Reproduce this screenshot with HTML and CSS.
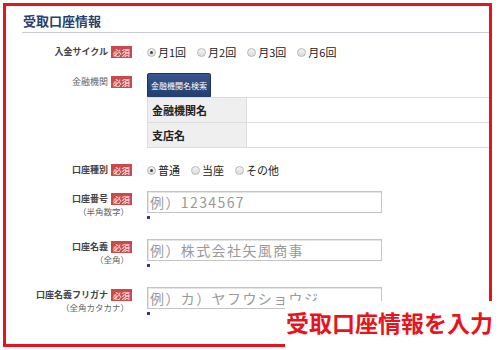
FILE: index.html
```html
<!DOCTYPE html>
<html>
<head>
  <meta charset="utf-8" />
  <meta name="viewport" content="width=device-width, initial-scale=1.0">
  <title>受取口座情報</title>
  <link rel="stylesheet" href="styles.css">
</head>
<body>

  <div class="frame">
    <h2 class="section-title">受取口座情報</h2>

    <div class="form">
      <!-- 入金サイクル -->
      <div class="form-row row-cycle">
        <div class="field-label">
          <div class="label-line"><span>入金サイクル</span><span class="badge">必須</span></div>
        </div>
        <div class="field-value radios">
          <label class="radio checked"><span class="radio-mark"></span>月1回</label>
          <label class="radio"><span class="radio-mark"></span>月2回</label>
          <label class="radio"><span class="radio-mark"></span>月3回</label>
          <label class="radio"><span class="radio-mark"></span>月6回</label>
        </div>
      </div>

      <!-- 金融機関 -->
      <div class="form-row row-bank">
        <div class="field-label">
          <div class="label-line light"><span>金融機関</span><span class="badge">必須</span></div>
        </div>
        <div class="field-value">
          <button class="search-btn">金融機関名検索</button>
          <table class="bank-table">
            <tr><th>金融機関名</th><td></td></tr>
            <tr><th>支店名</th><td></td></tr>
          </table>
        </div>
      </div>

      <!-- 口座種別 -->
      <div class="form-row row-type">
        <div class="field-label">
          <div class="label-line"><span>口座種別</span><span class="badge">必須</span></div>
        </div>
        <div class="field-value radios">
          <label class="radio checked"><span class="radio-mark"></span>普通</label>
          <label class="radio"><span class="radio-mark"></span>当座</label>
          <label class="radio"><span class="radio-mark"></span>その他</label>
        </div>
      </div>

      <!-- 口座番号 -->
      <div class="form-row row-input first">
        <div class="field-label">
          <div class="label-line"><span>口座番号</span><span class="badge">必須</span></div>
          <div class="sub">（半角数字）</div>
        </div>
        <div class="field-value">
          <input class="text-input" type="text" placeholder="例）1234567">
          <div class="dot"></div>
        </div>
      </div>

      <!-- 口座名義 -->
      <div class="form-row row-input">
        <div class="field-label">
          <div class="label-line"><span>口座名義</span><span class="badge">必須</span></div>
          <div class="sub">（全角）</div>
        </div>
        <div class="field-value">
          <input class="text-input" type="text" placeholder="例）株式会社矢風商事">
          <div class="dot"></div>
        </div>
      </div>

      <!-- 口座名義フリガナ -->
      <div class="form-row row-input">
        <div class="field-label">
          <div class="label-line"><span>口座名義フリガナ</span><span class="badge">必須</span></div>
          <div class="sub">（全角カタカナ）</div>
        </div>
        <div class="field-value">
          <input class="text-input" type="text" placeholder="例）カ）ヤフウショウジ">
          <div class="dot"></div>
        </div>
      </div>
    </div>
  </div>

  <div class="callout">受取口座情報を入力</div>

</body>
</html>
```

FILE: styles.css
```css
/* --- General Setup --- */
:root {
  --frame-red: #e8141c;
  --navy: #283f6d;
  --badge-red: #c84a4c;
  --line-color: #dcdcdc;
  --text-color: #333;
}
*, *::before, *::after {
  box-sizing: border-box;
}
html, body {
  margin: 0;
  overflow: hidden;
}
body {
  position: relative;
  width: 500px;
  height: 350px;
  background: #fff;
  font-family: "Noto Sans CJK JP", "Noto Sans", sans-serif;
  color: var(--text-color);
}

/* --- Red frame --- */
.frame {
  margin: 3px;
  width: 489px;
  height: 344px;
  border: 3px solid var(--frame-red);
  overflow: hidden;
}
.section-title {
  margin: 0 0 0 16px;
  padding: 7px 0 3px 1px;
  font-size: 13px;
  line-height: 16px;
  font-weight: bold;
  color: var(--navy);
  border-bottom: 1px solid #c9ccd3;
}

/* --- Form rows --- */
.form-row {
  display: flex;
}
.field-label {
  width: 126px;
  flex-shrink: 0;
  display: flex;
  flex-direction: column;
  align-items: flex-end;
}
.field-value {
  margin-left: 15px;
}
.label-line {
  display: flex;
  align-items: center;
  gap: 3px;
  font-size: 9px;
  line-height: 12px;
  font-weight: bold;
  color: #444;
}
.label-line.light {
  font-weight: normal;
  color: #666;
}
.badge {
  display: inline-block;
  padding: 0 2px;
  font-size: 8.5px;
  line-height: 12px;
  font-weight: normal;
  color: #fff;
  background: var(--badge-red);
}
.sub {
  margin-right: 3px;
  font-size: 8.5px;
  line-height: 12px;
  color: #666;
}

.row-cycle {
  margin-top: 9px;
  height: 20px;
  align-items: center;
}
.row-bank {
  margin-top: 11px;
}
.row-bank .field-label {
  padding-top: 3px;
}
.row-type {
  margin-top: 12px;
  height: 20px;
  align-items: center;
}
.row-input {
  margin-top: 20px;
}
.row-input.first {
  margin-top: 11px;
}
.row-input .field-label {
  padding-top: 2px;
}

/* --- Radios --- */
.radios {
  display: flex;
  align-items: center;
}
.radio {
  display: flex;
  align-items: center;
  margin-right: 11px;
  font-size: 11px;
  line-height: 14px;
  color: #222;
}
.radio-mark {
  width: 9px;
  height: 9px;
  margin-right: 2px;
  border-radius: 50%;
  border: 1px solid #b8b8b8;
  background: linear-gradient(#f4f4f4, #dcdcdc);
  display: flex;
  align-items: center;
  justify-content: center;
}
.radio.checked .radio-mark::after {
  content: "";
  width: 3px;
  height: 3px;
  border-radius: 50%;
  background: #444;
}

/* --- Bank search --- */
.search-btn {
  display: block;
  width: 64px;
  height: 25px;
  padding: 0;
  font-family: inherit;
  font-size: 8px;
  color: #fff;
  background: linear-gradient(#36568f, #243e6c);
  border: 1px solid #1e3359;
  border-radius: 2px;
}
.bank-table {
  margin-top: -1px;
  width: 360px;
  border-collapse: collapse;
}
.bank-table th,
.bank-table td {
  height: 25px;
  border: 1px solid var(--line-color);
  border-right: none;
}
.bank-table th {
  width: 99px;
  padding: 0 0 0 4px;
  text-align: left;
  font-size: 11px;
  font-weight: bold;
  color: #222;
  background: #efefef;
  border-right: 1px solid var(--line-color);
}

/* --- Text inputs --- */
.text-input {
  display: block;
  width: 235px;
  height: 22px;
  margin: 0;
  padding: 0 2px;
  font-family: inherit;
  font-size: 14px;
  letter-spacing: 1.4px;
  border: 1px solid #c4c4c4;
  box-shadow: inset 1px 1px 0 #e4e4e4;
  outline: none;
}
.text-input::placeholder {
  color: #999;
}
.dot {
  width: 3px;
  height: 3px;
  margin-top: 3px;
  background: var(--navy);
}

/* --- Callout over the frame corner --- */
.callout {
  position: absolute;
  left: 285px;
  top: 301px;
  right: 0;
  bottom: 0;
  padding: 10px 0 0 1px;
  background: #fff;
  font-size: 23px;
  line-height: 23px;
  font-weight: bold;
  color: var(--frame-red);
  white-space: nowrap;
}
```
